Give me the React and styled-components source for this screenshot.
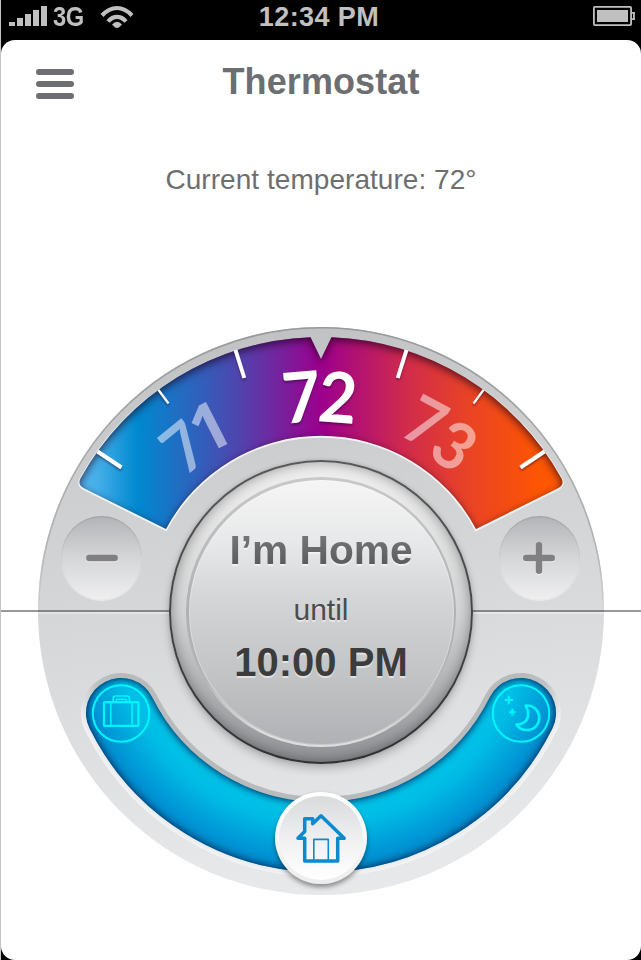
import React from 'react';
import styled, { createGlobalStyle } from 'styled-components';

const GlobalStyle = createGlobalStyle`
  * { box-sizing: border-box; }
  body { margin: 0; background: #000; font-family: "Liberation Sans", Arial, sans-serif; }
`;

const Phone = styled.div`
  width: 641px;
  height: 960px;
  background: #000;
  border-left: 1px solid #c4c4c4;
  display: flex;
  flex-direction: column;
  overflow: hidden;
`;

const StatusBar = styled.header`
  height: 40px;
  flex: none;
  display: grid;
  grid-template-columns: 1fr auto 1fr;
  align-items: start;
  padding: 0 6px 0 2px;
  color: #c0c0c0;
`;

const StatusGroup = styled.div`
  display: flex;
  align-items: flex-start;
  justify-content: ${(p) => (p.$end ? 'flex-end' : 'flex-start')};
  padding-left: ${(p) => (p.$end ? 0 : '5px')};
`;

const StatusText = styled.span`
  font-size: 27px;
  line-height: 34px;
  font-weight: 700;
  letter-spacing: 0.4px;
`;

const NetworkText = styled(StatusText)`
  width: 36px;
  margin: 0 11px 0 5px;
  padding-right: 1px;
  letter-spacing: -0.4px;
  transform: scaleX(0.88);
  transform-origin: left;
`;

const StatusIcon = styled.svg`
  display: block;
  flex: none;
  margin-top: ${(p) => p.$top}px;
`;

const Screen = styled.main`
  flex: 1;
  background: #fff;
  border-radius: 14px;
  display: flex;
  flex-direction: column;
  align-items: center;
`;

const TitleBar = styled.div`
  align-self: stretch;
  height: 122px;
  flex: none;
  display: grid;
  grid-template-columns: 38px 1fr 38px;
  align-items: start;
  padding: 20px 35px 0 35px;
`;

const MenuButton = styled.button`
  display: flex;
  flex-direction: column;
  gap: 6px;
  margin: 9px 0 0;
  padding: 0;
  border: 0;
  background: none;
`;

const MenuLine = styled.span`
  width: 38px;
  height: 6px;
  border-radius: 3px;
  background: #6d6e71;
`;

const Title = styled.h1`
  margin: 0;
  text-align: center;
  font-size: 36px;
  line-height: 43px;
  letter-spacing: 0.1px;
  color: #6d6e71;
`;

const Reading = styled.p`
  margin: 0;
  height: 165px;
  flex: none;
  font-size: 28px;
  line-height: 36px;
  letter-spacing: 0.05px;
  color: #6d6e71;
`;

const Dial = styled.section`
  position: relative;
  width: 566px;
  height: 568px;
`;

const DialArt = styled.svg`
  display: block;
`;

const Horizon = styled.div`
  position: absolute;
  left: -37px;
  width: 640px;
  top: 283px;
  height: 2px;
  background: rgba(60, 60, 64, 0.52);
`;

const Digit = styled.text`
  font-family: ${(p) => (p.$footless ? '"Open Sans"' : 'Lato')}, sans-serif;
  font-weight: 700;
  font-size: ${(p) => (p.$current ? 70 : 66)}px;
  text-anchor: middle;
  fill: #fff;
  fill-opacity: ${(p) => (p.$current ? 1 : 0.5)};
`;

const StepButton = styled.button`
  position: absolute;
  top: 189px;
  left: ${(p) => p.$x}px;
  width: 81px;
  height: 84px;
  padding: 0;
  border: 0;
  border-radius: 50%;
  display: grid;
  place-items: center;
  background: linear-gradient(#b3b4b7, #d4d5d7 48%, #efeff0);
  box-shadow: inset 0 1px 1px rgba(120, 120, 125, 0.35), 0 1px 1px rgba(255, 255, 255, 0.55);
`;

const StepGlyph = styled.svg`
  display: block;
  filter: drop-shadow(0 1.5px 0 rgba(255, 255, 255, 0.6));
`;

const Knob = styled.div`
  position: absolute;
  left: 131px;
  top: 133px;
  width: 304px;
  height: 304px;
  border-radius: 50%;
  padding: 17px;
  background: linear-gradient(#58595b, #303133);
  box-shadow: 0 5px 8px rgba(0, 0, 0, 0.2), 0 0 4px rgba(0, 0, 0, 0.12);
  &::before {
    content: '';
    position: absolute;
    inset: 2px;
    border-radius: 50%;
    background: linear-gradient(#f0f0f0, #d3d4d5 50%, #919296);
    box-shadow: inset 0 0 13px rgba(0, 0, 0, 0.38);
  }
`;

const KnobRim = styled.div`
  position: relative;
  width: 270px;
  height: 270px;
  border-radius: 50%;
  padding: 2.5px;
  background: linear-gradient(#c8c9ca, #b0b0b2 50%, #b5b5b7 75%, #dededf 96%);
`;

const KnobFace = styled.div`
  width: 265px;
  height: 265px;
  border-radius: 50%;
  background: linear-gradient(#f5f5f5, #e7e8e9 24%, #d3d4d5 46%, #c1c2c4 76%, #b0b1b4);
  box-shadow: inset 0 0 0 1px rgba(255, 255, 255, 0.3);
  display: flex;
  flex-direction: column;
  align-items: center;
  padding-top: 46px;
  text-shadow: 0 2px 0 rgba(255, 255, 255, 0.5);
`;

const ModeName = styled.strong`
  font-size: 40.7px;
  line-height: 48px;
  background: linear-gradient(#757678 20%, #58595a 85%);
  background-clip: text;
  color: transparent;
  text-shadow: none;
  filter: drop-shadow(0 2px 0 rgba(255, 255, 255, 0.5));
`;

const Until = styled.span`
  margin-top: 16px;
  font-size: 30px;
  line-height: 40px;
  color: #4b4c4d;
`;

const EndTime = styled.strong`
  margin-top: 8px;
  font-size: 40px;
  line-height: 48px;
  color: #3c3c3d;
`;

const ModeHandle = styled.button`
  position: absolute;
  left: 237px;
  top: 465px;
  width: 92px;
  height: 92px;
  padding: 0;
  border: 4px solid transparent;
  border-radius: 50%;
  display: grid;
  place-items: center;
  background:
    linear-gradient(#d9dadc, #f3f3f4 60%, #fff) padding-box,
    linear-gradient(#fff, #ededee) border-box;
  box-shadow: 0 3px 5px rgba(0, 0, 0, 0.42);
`;

const HouseIcon = styled.svg`
  display: block;
`;

const slot = 'M121 713 A223.3 223.3 0 0 0 521 713';
const wedge =
  'M166 529 L83.5 488 Q77.5 484.5 80.5 478.5 A274 274 0 0 1 310.5 337.2 L321 359 L331.5 337.2 A274 274 0 0 1 561.5 478.5 Q564.5 484.5 558.5 488 L476 529 A175.5 175.5 0 0 0 166 529 Z';

const ticks = [
  [235.5, 350, 244.3, 378, 4],
  [158.5, 390, 168.5, 403.5, 2.2],
  [97.5, 451.5, 121.5, 467.5, 4],
  [406.5, 350, 397.7, 378, 4],
  [483.5, 390, 473.5, 403.5, 2.2],
  [544.5, 451.5, 520.5, 467.5, 4],
];

const digits = [
  { char: '7', x: 184, y: 447, angle: -39 },
  { char: '1', x: 209.5, y: 426.5, angle: -27, footless: true },
  { char: '7', x: 301.5, y: 397, angle: -5, current: true },
  { char: '2', x: 338, y: 397.5, angle: 4.5, current: true },
  { char: '7', x: 425.5, y: 422, angle: 28 },
  { char: '3', x: 454.5, y: 445.5, angle: 36 },
];

function DialDrawing() {
  return (
    <DialArt width="566" height="568" viewBox="38 327 566 568">
      <defs>
        <linearGradient id="plate" x1="0" y1="0" x2="0.15" y2="1">
          <stop offset="0" stopColor="#bdbec0" />
          <stop offset="0.3" stopColor="#cecfd1" />
          <stop offset="0.5" stopColor="#d5d6d8" />
          <stop offset="1" stopColor="#e7e8ea" />
        </linearGradient>
        <linearGradient id="plateEdge" x1="0" y1="0" x2="0" y2="1">
          <stop offset="0" stopColor="#98999b" />
          <stop offset="0.4" stopColor="#b5b6b8" />
          <stop offset="0.52" stopColor="#b9babc" stopOpacity="0" />
        </linearGradient>
        <linearGradient id="spectrum" gradientUnits="userSpaceOnUse" x1="79" y1="0" x2="563" y2="0">
          <stop offset="0" stopColor="#55b8ef" />
          <stop offset="0.04" stopColor="#43aee9" />
          <stop offset="0.12" stopColor="#0089d0" />
          <stop offset="0.32" stopColor="#4c48b0" />
          <stop offset="0.5" stopColor="#9c008d" />
          <stop offset="0.67" stopColor="#cf2a4d" />
          <stop offset="0.81" stopColor="#ea4424" />
          <stop offset="0.94" stopColor="#fc5404" />
          <stop offset="1" stopColor="#ff5a00" />
        </linearGradient>
        <linearGradient id="wedgeLip" x1="0" y1="0" x2="0" y2="1">
          <stop offset="0.1" stopColor="#fff" stopOpacity="0" />
          <stop offset="0.5" stopColor="#fff" stopOpacity="0.75" />
        </linearGradient>
        <radialGradient id="track" gradientUnits="userSpaceOnUse" cx="321" cy="613.7" r="259">
          <stop offset="0.73" stopColor="#00c4e9" />
          <stop offset="0.81" stopColor="#00bce5" />
          <stop offset="0.95" stopColor="#0094d5" />
          <stop offset="1" stopColor="#0088c8" />
        </radialGradient>
        <radialGradient id="bevel" gradientUnits="userSpaceOnUse" cx="321" cy="613.7" r="264">
          <stop offset="0.8" stopColor="#b9babc" />
          <stop offset="0.89" stopColor="#bfc0c2" />
          <stop offset="0.97" stopColor="#e4e5e6" />
          <stop offset="1" stopColor="#f4f5f6" />
        </radialGradient>
        <filter id="wedgeInset" x="-5%" y="-8%" width="110%" height="116%" colorInterpolationFilters="sRGB">
          <feComponentTransfer in="SourceAlpha" result="inv">
            <feFuncA type="table" tableValues="1 0" />
          </feComponentTransfer>
          <feGaussianBlur in="inv" stdDeviation="4.5" />
          <feOffset dy="2.5" result="b" />
          <feFlood floodColor="#20001c" floodOpacity="0.72" />
          <feComposite in2="b" operator="in" />
          <feComposite in2="SourceAlpha" operator="in" result="s" />
          <feMerge>
            <feMergeNode in="SourceGraphic" />
            <feMergeNode in="s" />
          </feMerge>
        </filter>
        <filter
          id="trackInset"
          filterUnits="userSpaceOnUse"
          x="70"
          y="660"
          width="502"
          height="235"
          colorInterpolationFilters="sRGB"
        >
          <feComponentTransfer in="SourceAlpha" result="inv">
            <feFuncA type="table" tableValues="1 0" />
          </feComponentTransfer>
          <feGaussianBlur in="inv" stdDeviation="4.5" />
          <feComponentTransfer result="b">
            <feFuncA type="linear" slope="1.5" />
          </feComponentTransfer>
          <feFlood floodColor="#00386e" floodOpacity="0.95" />
          <feComposite in2="b" operator="in" />
          <feComposite in2="SourceAlpha" operator="in" result="s" />
          <feMerge>
            <feMergeNode in="SourceGraphic" />
            <feMergeNode in="s" />
          </feMerge>
        </filter>
        <filter id="drop" x="-20%" y="-20%" width="140%" height="150%" colorInterpolationFilters="sRGB">
          <feDropShadow dx="0" dy="2" stdDeviation="0.8" floodColor="#200020" floodOpacity="0.4" />
        </filter>
      </defs>

      <ellipse cx="321" cy="611" rx="283" ry="284" fill="url(#plate)" />
      <ellipse cx="321" cy="611" rx="282.2" ry="283.2" fill="none" stroke="url(#plateEdge)" strokeWidth="1.6" />
      <rect x="38" y="612" width="566" height="2" fill="#fff" fillOpacity="0.35" />

      <path d={wedge} fill="none" stroke="url(#wedgeLip)" strokeWidth="2.4" transform="translate(0 0.8)" />
      <g filter="url(#wedgeInset)">
        <path d={wedge} fill="url(#spectrum)" />
      </g>
      <g filter="url(#drop)">
        {ticks.map(([x1, y1, x2, y2, w]) => (
          <line key={x1} x1={x1} y1={y1} x2={x2} y2={y2} stroke="#fff" strokeWidth={w} />
        ))}
      </g>
      {digits.map((d) => (
        <g key={d.angle} filter={d.current ? 'url(#drop)' : undefined}>
          <Digit
            $current={d.current}
            $footless={d.footless}
            y={d.current ? 25.2 : 23.8}
            transform={`translate(${d.x} ${d.y}) rotate(${d.angle}) scale(0.95 1)`}
          >
            {d.char}
          </Digit>
        </g>
      ))}

      <path d={slot} fill="none" stroke="url(#bevel)" strokeWidth="80" strokeLinecap="round" />
      <g filter="url(#trackInset)">
        <path d={slot} fill="none" stroke="url(#track)" strokeWidth="70" strokeLinecap="round" />
      </g>

      <g fill="none" stroke="#00f6ff" strokeWidth="2">
        <circle cx="121" cy="713.5" r="28.2" />
        <rect x="104" y="702.2" width="34.4" height="23.6" rx="0.5" strokeWidth="2.2" />
        <path d="M110.8 702V726M132 702V726" strokeWidth="1.5" />
        <path
          d="M113.2 702V698.5Q113.2 696 115.7 696H127Q129.5 696 129.5 698.5V702M116.3 702V700.7Q116.3 699.2 117.8 699.2H124.9Q126.4 699.2 126.4 700.7V702"
          strokeWidth="1.6"
        />
        <circle cx="521" cy="713.5" r="28.2" />
        <path
          d="M526.5 705.5C534 705.2 539.2 711 539.2 717.8C539.2 725 534 730 527 730C522 730 518.5 728 516.5 724.6C522.5 724.6 527.4 721.3 528 715.8C528.4 711.8 527.6 708.6 525.6 705.8Z"
          strokeWidth="2.6"
          strokeLinejoin="round"
        />
        <path d="M508.8 695.8V704.2M504.6 700H513M512.3 708.8V715.6M508.9 712.2H515.7" strokeWidth="2.1" />
      </g>
    </DialArt>
  );
}

export default function App() {
  return (
    <>
      <GlobalStyle />
      <Phone>
        <StatusBar>
          <StatusGroup>
            <StatusIcon $top={6} width="40" height="21" viewBox="0 0 40 21" fill="#c0c0c0">
              <path d="M1 16H7V20H1ZM9 12H15V20H9ZM17 8H23V20H17ZM25 4H31V20H25ZM33 0H39V20H33Z" />
            </StatusIcon>
            <NetworkText>3G</NetworkText>
            <StatusIcon $top={5} width="34" height="24" viewBox="0 0 34 24" fill="none" stroke="#c0c0c0" strokeWidth="4.2">
              <path d="M2 10.5Q9 3 17 3T32 10.5M8 16.5Q12 11.8 17 11.8T26 16.5" />
              <path d="M12 19.5Q17 14.2 22 19.5L19.5 22Q17 24 14.5 22Z" fill="#c0c0c0" stroke="none" />
            </StatusIcon>
          </StatusGroup>
          <StatusText>12:34 PM</StatusText>
          <StatusGroup $end>
            <StatusIcon $top={6} width="42" height="20" viewBox="0 0 42 20" fill="none" stroke="#c0c0c0" strokeWidth="1.8">
              <rect x="0.9" y="0.9" width="37.2" height="18.2" rx="1" />
              <path d="M38 6.8H41V13.2H38" />
              <rect x="4" y="4" width="31" height="12" fill="#c0c0c0" stroke="none" />
            </StatusIcon>
          </StatusGroup>
        </StatusBar>

        <Screen>
          <TitleBar>
            <MenuButton aria-label="Menu">
              <MenuLine />
              <MenuLine />
              <MenuLine />
            </MenuButton>
            <Title>Thermostat</Title>
          </TitleBar>
          <Reading>Current temperature: 72°</Reading>

          <Dial>
            <DialDrawing />
            <StepButton $x={23} aria-label="Lower">
              <StepGlyph width="34" height="34" viewBox="0 0 34 34" stroke="#808082" strokeWidth="6.6" strokeLinecap="round">
                <path d="M4.4 17H29.6" />
              </StepGlyph>
            </StepButton>
            <StepButton $x={460.5} aria-label="Raise">
              <StepGlyph width="34" height="34" viewBox="0 0 34 34" stroke="#808082" strokeWidth="6.4" strokeLinecap="round">
                <path d="M4.2 17H29.8M17 4.2V29.8" />
              </StepGlyph>
            </StepButton>
            <Horizon />
            <ModeHandle aria-label="Home">
              <HouseIcon
                width="54"
                height="54"
                viewBox="294 811 54 54"
                fill="none"
                stroke="#0a8bd0"
                strokeWidth="3.5"
                strokeLinejoin="round"
              >
                <path d="M321 815.8L344.2 838.2H337.7V861.1H304.7V838.2H298L304.7 831.5V818.8H312.7V823.8Z" />
                <path d="M313.8 861V839.4H328.3V861" strokeWidth="1.6" />
              </HouseIcon>
            </ModeHandle>
            <Knob>
              <KnobRim>
                <KnobFace>
                  <ModeName>I’m Home</ModeName>
                  <Until>until</Until>
                  <EndTime>10:00 PM</EndTime>
                </KnobFace>
              </KnobRim>
            </Knob>
          </Dial>
        </Screen>
      </Phone>
    </>
  );
}
